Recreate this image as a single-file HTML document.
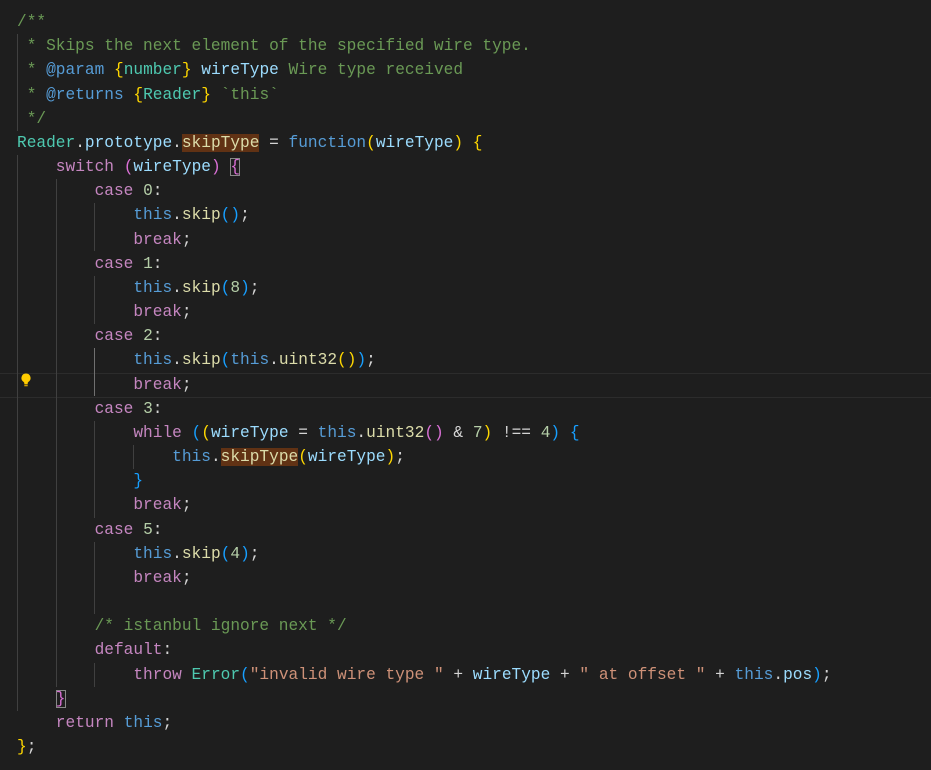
<!DOCTYPE html>
<html><head><meta charset="utf-8"><style>
html,body{margin:0;padding:0;background:#1e1e1e;width:931px;height:770px;overflow:hidden}
pre{position:absolute;left:17px;top:10px;margin:0;font-family:"Liberation Mono",monospace;font-size:16.17px;line-height:24.17px;color:#d4d4d4;white-space:pre}
.c{color:#6a9955}.k{color:#c586c0}.b{color:#569cd6}.v{color:#9cdcfe}.f{color:#dcdcaa}.t{color:#4ec9b0}.n{color:#b5cea8}.s{color:#ce9178}
.y{color:#ffd700}.p{color:#da70d6}.u{color:#179fff}.tg{color:#569cd6}.ty{color:#4ec9b0}
.h{background:#613214}.box{outline:1px solid #888;outline-offset:-1px}
.g{position:absolute;width:1px;background:#404040}
.cur{position:absolute;left:0;width:931px;top:373px;height:23px;border-top:1px solid #2c2c2c;border-bottom:1px solid #2c2c2c}
</style></head><body>
<div class="cur"></div>
<div class="g" style="left:17px;top:34px;height:97px"></div>
<div class="g" style="left:17px;top:155px;height:556px"></div>
<div class="g" style="left:56px;top:179px;height:508px"></div>
<div class="g" style="left:94px;top:203px;height:48px"></div>
<div class="g" style="left:94px;top:276px;height:48px"></div>
<div class="g" style="left:94px;top:348px;height:48px;background:#707070"></div>
<div class="g" style="left:94px;top:421px;height:97px"></div>
<div class="g" style="left:94px;top:542px;height:72px"></div>
<div class="g" style="left:94px;top:663px;height:24px"></div>
<div class="g" style="left:133px;top:445px;height:24px"></div>
<svg style="position:absolute;left:19px;top:372px" width="14" height="16" viewBox="0 0 14 16"><path d="M7 1.5a4.5 4.5 0 0 0-2.6 8.2c.6.5.9 1 .9 1.6V12h3.4v-.7c0-.6.3-1.1.9-1.6A4.5 4.5 0 0 0 7 1.5z" fill="#ffcc00"/><rect x="5.3" y="12.5" width="3.4" height="1.8" fill="#d0a000"/></svg>
<pre><span class="c">/**
 * Skips the next element of the specified wire type.
 * </span><span class="tg">@param</span><span class="c"> </span><span class="y">{</span><span class="ty">number</span><span class="y">}</span><span class="c"> </span><span class="v">wireType</span><span class="c"> Wire type received
 * </span><span class="tg">@returns</span><span class="c"> </span><span class="y">{</span><span class="ty">Reader</span><span class="y">}</span><span class="c"> `this`
 */</span>
<span class="t">Reader</span>.<span class="v">prototype</span>.<span class="f h">skipType</span> = <span class="b">function</span><span class="y">(</span><span class="v">wireType</span><span class="y">)</span> <span class="y">{</span>
    <span class="k">switch</span> <span class="p">(</span><span class="v">wireType</span><span class="p">)</span> <span class="p box">{</span>
        <span class="k">case</span> <span class="n">0</span>:
            <span class="b">this</span>.<span class="f">skip</span><span class="u">()</span>;
            <span class="k">break</span>;
        <span class="k">case</span> <span class="n">1</span>:
            <span class="b">this</span>.<span class="f">skip</span><span class="u">(</span><span class="n">8</span><span class="u">)</span>;
            <span class="k">break</span>;
        <span class="k">case</span> <span class="n">2</span>:
            <span class="b">this</span>.<span class="f">skip</span><span class="u">(</span><span class="b">this</span>.<span class="f">uint32</span><span class="y">()</span><span class="u">)</span>;
            <span class="k">break</span>;
        <span class="k">case</span> <span class="n">3</span>:
            <span class="k">while</span> <span class="u">(</span><span class="y">(</span><span class="v">wireType</span> = <span class="b">this</span>.<span class="f">uint32</span><span class="p">()</span> &amp; <span class="n">7</span><span class="y">)</span> !== <span class="n">4</span><span class="u">)</span> <span class="u">{</span>
                <span class="b">this</span>.<span class="f h">skipType</span><span class="y">(</span><span class="v">wireType</span><span class="y">)</span>;
            <span class="u">}</span>
            <span class="k">break</span>;
        <span class="k">case</span> <span class="n">5</span>:
            <span class="b">this</span>.<span class="f">skip</span><span class="u">(</span><span class="n">4</span><span class="u">)</span>;
            <span class="k">break</span>;

        <span class="c">/* istanbul ignore next */</span>
        <span class="k">default</span>:
            <span class="k">throw</span> <span class="t">Error</span><span class="u">(</span><span class="s">"invalid wire type "</span> + <span class="v">wireType</span> + <span class="s">" at offset "</span> + <span class="b">this</span>.<span class="v">pos</span><span class="u">)</span>;
    <span class="p box">}</span>
    <span class="k">return</span> <span class="b">this</span>;
<span class="y">}</span>;</pre>
</body></html>
